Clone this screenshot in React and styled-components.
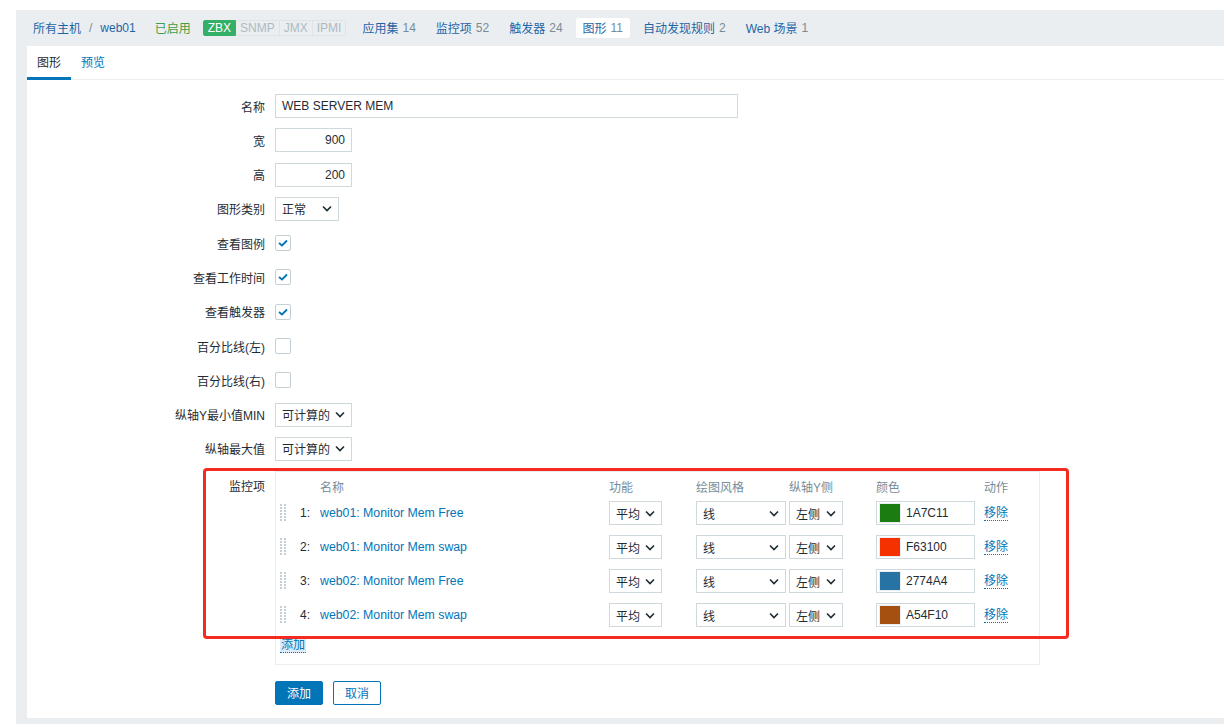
import React from 'react'
import styled, { createGlobalStyle } from 'styled-components'

const GlobalStyle = createGlobalStyle`
  html, body {
    margin: 0;
    padding: 0;
    background: #ffffff;
    overflow: hidden;
  }
  body {
    font-family: 'Liberation Sans', Arial, 'Noto Sans CJK SC', sans-serif;
    font-size: 12px;
    color: #1f2c33;
  }
`

const Page = styled('div')`
  height: 724px;
  padding: 10px 0 0 16px;
  box-sizing: border-box;
`
const Frame = styled('div')`
  background: #ebeef0;
  height: 714px;
  padding-bottom: 6px;
  box-sizing: border-box;
  display: flex;
  flex-direction: column;
`
const Header = styled('div')`
  height: 36px;
  display: flex;
  align-items: center;
  padding: 0 0 1px 17px;
  box-sizing: border-box;
  flex-shrink: 0;
`
const Crumbs = styled('div')`
  display: flex;
  align-items: center;
  gap: 8px;
  margin-right: 19px;
`
const Slash = styled('span')`
  color: #768d99;
`
const NavLink = styled('span')`
  color: #1f65a6;
`
const Status = styled('span')`
  color: #429e47;
  margin-right: 12px;
`
const Badges = styled('div')`
  display: flex;
  height: 16px;
  margin-right: 9px;
`
const Badge = styled('span')`
  display: flex;
  align-items: center;
  padding: 0 4px;
  font-size: 12px;
  border: 1px solid ${p => (p.$on ? '#34af67' : '#dfe4e7')};
  border-left-width: ${p => (p.$first ? '1px' : '0')};
  background: ${p => (p.$on ? '#34af67' : '#ebeef0')};
  color: ${p => (p.$on ? '#ffffff' : '#acbbc2')};
  border-radius: ${p => (p.$first ? '2px 0 0 2px' : p.$last ? '0 2px 2px 0' : '0')};
`
const NavItems = styled('div')`
  display: flex;
  gap: 6px;
  align-items: center;
`
const NavItem = styled('span')`
  display: flex;
  align-items: center;
  height: 20px;
  padding: 0 7px;
  border-radius: 2px;
  color: #1f65a6;
  background: ${p => (p.$active ? '#ffffff' : 'transparent')};
`
const Count = styled('span')`
  color: #768d99;
  margin-left: 4px;
`
const Panel = styled('div')`
  flex: 1;
  margin-left: 11px;
  background: #ffffff;
`
const TabBar = styled('div')`
  display: flex;
  height: 33px;
  border-bottom: 1px solid #ebeef0;
`
const Tab = styled('div')`
  padding: 4px 10px 0 10px;
  height: 27px;
  line-height: 27px;
  color: ${p => (p.$active ? '#1f2c33' : '#0275b8')};
  border-bottom: 3px solid ${p => (p.$active ? '#0275b8' : 'transparent')};
  margin-bottom: -1px;
`
const Form = styled('div')`
  padding-top: 14px;
`
const Row = styled('div')`
  display: grid;
  grid-template-columns: 238px 1fr;
  column-gap: 10px;
  align-items: ${p => (p.$top ? 'start' : 'center')};
  min-height: 24px;
  margin-bottom: 10.3px;
  position: relative;
`
const Label = styled('div')`
  text-align: right;
  padding-top: ${p => (p.$top ? '6px' : '0')};
`
const TextInput = styled('div')`
  width: ${p => p.$w}px;
  height: 24px;
  box-sizing: border-box;
  border: 1px solid #cfd8dc;
  display: flex;
  align-items: center;
  justify-content: ${p => (p.$right ? 'flex-end' : 'flex-start')};
  padding: 0 6px;
  background: #ffffff;
`
const Select = styled('div')`
  width: ${p => p.$w}px;
  height: 24px;
  box-sizing: border-box;
  border: 1px solid #cfd8dc;
  display: flex;
  align-items: center;
  justify-content: space-between;
  padding: 0 6px 0 6px;
  background: #ffffff;
`
const Check = styled('div')`
  width: 16px;
  height: 16px;
  box-sizing: border-box;
  border: 1px solid #c4cfd6;
  border-radius: 2px;
  display: flex;
  align-items: center;
  justify-content: center;
`
const ItemsBox = styled('div')`
  width: 765px;
  height: 194px;
  box-sizing: border-box;
  border: 1px solid #ebeef0;
  padding: 6px 0 0 4px;
`
const Grid = styled('div')`
  display: grid;
  grid-template-columns: 16px 24px 289px 87px 93px 87px 108px auto;
  align-items: center;
`
const HeadRow = styled(Grid)`
  height: 16px;
  color: #768d99;
  margin-bottom: 7px;
`
const ItemRow = styled(Grid)`
  height: 24px;
  margin-bottom: 10px;
`
const Num = styled('span')`
  text-align: right;
  padding-right: 10px;
`
const ItemName = styled('span')`
  color: #0275b8;
  font-size: 12.3px;
`
const ColorInput = styled('div')`
  width: 99px;
  height: 24px;
  box-sizing: border-box;
  border: 1px solid #cfd8dc;
  display: flex;
  align-items: center;
  gap: 5px;
  padding-left: 2px;
`
const Swatch = styled('span')`
  width: 20px;
  height: 18px;
  background: ${p => p.$c};
  border: 1px solid #ebeef0;
`
const DottedLink = styled('span')`
  color: #0275b8;
  border-bottom: 1px dotted #0275b8;
  line-height: 14px;
`
const AddLink = styled(DottedLink)`
  display: inline-block;
  margin: 0;
  background: #dcebf7;
  padding: 1px 1px 0 1px;
`
const Annotation = styled('div')`
  position: absolute;
  left: 176px;
  top: -3px;
  width: 866px;
  height: 171px;
  box-sizing: border-box;
  border: 3px solid #f52a20;
  border-radius: 4px;
  pointer-events: none;
`
const Buttons = styled('div')`
  display: flex;
  gap: 10px;
  padding-top: 5px;
`
const Button = styled('div')`
  height: 24px;
  box-sizing: border-box;
  padding: 0 ${p => (p.$primary ? '11px' : '11px')};
  border-radius: 2px;
  display: flex;
  align-items: center;
  border: 1px solid #0275b8;
  background: ${p => (p.$primary ? '#0275b8' : '#ffffff')};
  color: ${p => (p.$primary ? '#ffffff' : '#0275b8')};
`

const Chevron = () => (
  <svg width="10" height="7" viewBox="0 0 10 7">
    <path d="M1 1.5 L5 5.5 L9 1.5" fill="none" stroke="#1f2c33" strokeWidth="1.6" />
  </svg>
)

const Tick = () => (
  <svg width="10" height="8" viewBox="0 0 10 8">
    <path d="M1 4 L4 6.5 L9 1.5" fill="none" stroke="#0275b8" strokeWidth="1.8" />
  </svg>
)

const Handle = () => (
  <svg width="8" height="18" viewBox="0 0 8 18">
    {[0, 3, 6, 9, 12, 15].map(y =>
      [0, 4].map(x => <rect key={`${x}-${y}`} x={x} y={y} width="2" height="2" fill="#c4cfd6" />)
    )}
  </svg>
)

const SelectBox = ({ w, value }) => (
  <Select $w={w}>
    <span>{value}</span>
    <Chevron />
  </Select>
)

const items = [
  { name: 'web01: Monitor Mem Free', color: '1A7C11' },
  { name: 'web01: Monitor Mem swap', color: 'F63100' },
  { name: 'web02: Monitor Mem Free', color: '2774A4' },
  { name: 'web02: Monitor Mem swap', color: 'A54F10' }
]

const checks = [
  { label: '查看图例', on: true },
  { label: '查看工作时间', on: true },
  { label: '查看触发器', on: true },
  { label: '百分比线(左)', on: false },
  { label: '百分比线(右)', on: false }
]

const navs = [
  { name: '应用集', count: 14 },
  { name: '监控项', count: 52 },
  { name: '触发器', count: 24 },
  { name: '图形', count: 11, active: true },
  { name: '自动发现规则', count: 2 },
  { name: 'Web 场景', count: 1 }
]

const App = () => {
  return (
    <>
      <GlobalStyle />
      <Page>
        <Frame>
          <Header>
            <Crumbs>
              <NavLink>所有主机</NavLink>
              <Slash>/</Slash>
              <NavLink>web01</NavLink>
            </Crumbs>
            <Status>已启用</Status>
            <Badges>
              <Badge $on $first>ZBX</Badge>
              <Badge>SNMP</Badge>
              <Badge>JMX</Badge>
              <Badge $last>IPMI</Badge>
            </Badges>
            <NavItems>
              {navs.map(n => (
                <NavItem key={n.name} $active={n.active}>
                  {n.name}
                  <Count>{n.count}</Count>
                </NavItem>
              ))}
            </NavItems>
          </Header>
          <Panel>
            <TabBar>
              <Tab $active>图形</Tab>
              <Tab>预览</Tab>
            </TabBar>
            <Form>
              <Row>
                <Label>名称</Label>
                <TextInput $w={463}>WEB SERVER MEM</TextInput>
              </Row>
              <Row>
                <Label>宽</Label>
                <TextInput $w={77} $right>900</TextInput>
              </Row>
              <Row>
                <Label>高</Label>
                <TextInput $w={77} $right>200</TextInput>
              </Row>
              <Row>
                <Label>图形类别</Label>
                <SelectBox w={64} value="正常" />
              </Row>
              {checks.map(c => (
                <Row key={c.label}>
                  <Label>{c.label}</Label>
                  <Check>{c.on && <Tick />}</Check>
                </Row>
              ))}
              <Row>
                <Label>纵轴Y最小值MIN</Label>
                <SelectBox w={77} value="可计算的" />
              </Row>
              <Row>
                <Label>纵轴最大值</Label>
                <SelectBox w={77} value="可计算的" />
              </Row>
              <Row $top>
                <Label $top>监控项</Label>
                <ItemsBox>
                  <HeadRow>
                    <span />
                    <span />
                    <span>名称</span>
                    <span>功能</span>
                    <span>绘图风格</span>
                    <span>纵轴Y侧</span>
                    <span>颜色</span>
                    <span>动作</span>
                  </HeadRow>
                  {items.map((it, i) => (
                    <ItemRow key={it.name}>
                      <Handle />
                      <Num>{i + 1}:</Num>
                      <ItemName>{it.name}</ItemName>
                      <SelectBox w={53} value="平均" />
                      <SelectBox w={90} value="线" />
                      <SelectBox w={54} value="左侧" />
                      <ColorInput>
                        <Swatch $c={`#${it.color}`} />
                        <span>{it.color}</span>
                      </ColorInput>
                      <span>
                        <DottedLink>移除</DottedLink>
                      </span>
                    </ItemRow>
                  ))}
                  <AddLink>添加</AddLink>
                </ItemsBox>
                <Annotation />
              </Row>
              <Row>
                <span />
                <Buttons>
                  <Button $primary>添加</Button>
                  <Button>取消</Button>
                </Buttons>
              </Row>
            </Form>
          </Panel>
        </Frame>
      </Page>
    </>
  )
}

export default App
